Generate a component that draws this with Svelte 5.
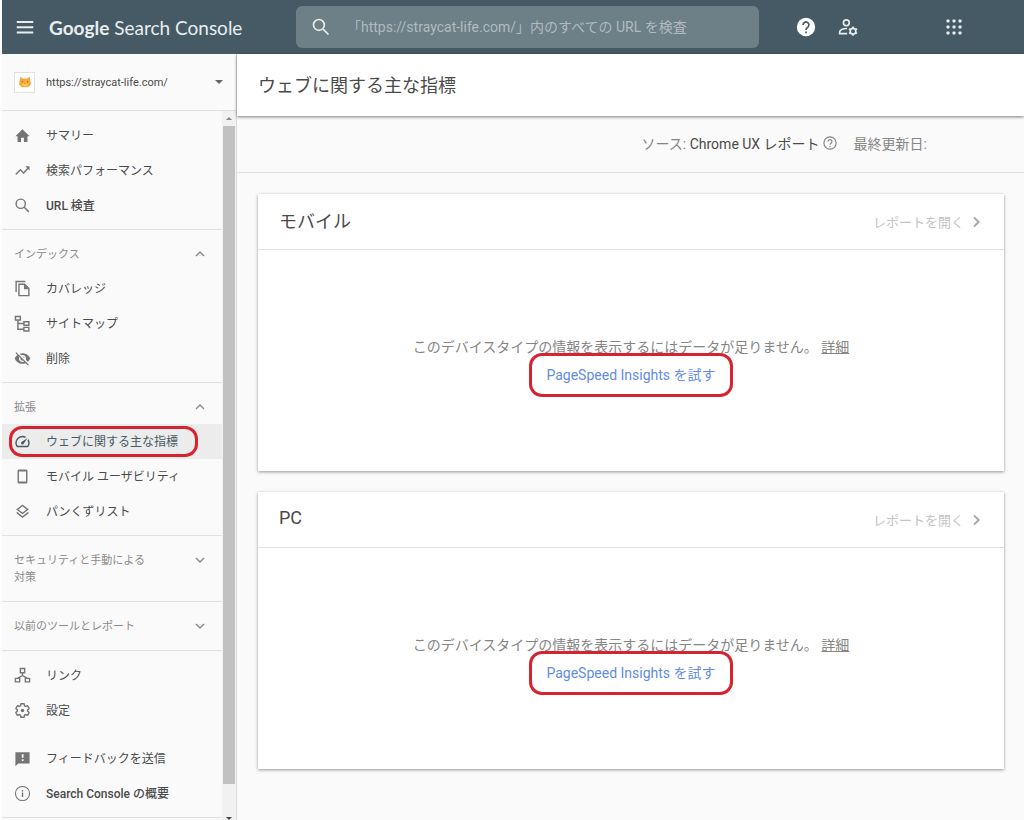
<script>
  const gear =
    'M19.14 12.94c.04-.3.06-.61.06-.94 0-.32-.02-.64-.07-.94l2.03-1.58c.18-.14.23-.41.12-.61l-1.92-3.32c-.12-.22-.37-.29-.59-.22l-2.39.96c-.5-.38-1.03-.7-1.62-.94l-.36-2.54c-.04-.24-.24-.41-.48-.41h-3.84c-.24 0-.43.17-.47.41l-.36 2.54c-.59.24-1.13.57-1.62.94l-2.39-.96c-.22-.08-.47 0-.59.22L2.74 8.87c-.12.21-.08.47.12.61l2.03 1.58c-.05.3-.09.63-.09.94s.02.64.07.94l-2.03 1.58c-.18.14-.23.41-.12.61l1.92 3.32c.12.22.37.29.59.22l2.39-.96c.5.38 1.03.7 1.62.94l.36 2.54c.05.24.24.41.48.41h3.84c.24 0 .44-.17.47-.41l.36-2.54c.59-.24 1.13-.56 1.62-.94l2.39.96c.22.08.47 0 .59-.22l1.92-3.32c.12-.22.07-.47-.12-.61z';

  const groups = [
    {
      items: [
        { icon: 'home', text: 'サマリー' },
        { icon: 'trend', text: '検索パフォーマンス' },
        { icon: 'search', text: 'URL 検査', medium: true }
      ]
    },
    {
      label: 'インデックス',
      open: true,
      items: [
        { icon: 'copy', text: 'カバレッジ' },
        { icon: 'tree', text: 'サイトマップ' },
        { icon: 'hidden', text: '削除' }
      ]
    },
    {
      label: '拡張',
      open: true,
      items: [
        { icon: 'speed', text: 'ウェブに関する主な指標', active: true },
        { icon: 'phone', text: 'モバイル ユーザビリティ' },
        { icon: 'layers', text: 'パンくずリスト' }
      ]
    },
    { label: 'セキュリティと手動による対策', items: [] },
    { label: '以前のツールとレポート', items: [] },
    {
      items: [
        { icon: 'links', text: 'リンク' },
        { icon: 'settings', text: '設定' },
        { icon: 'feedback', text: 'フィードバックを送信', spaced: true },
        { icon: 'info', text: 'Search Console の概要', medium: true }
      ]
    }
  ];

  const cards = ['モバイル', 'PC'];
</script>

{#snippet glyph(name)}
  <svg class="icon" viewBox="0 0 24 24" aria-hidden="true">
    {#if name === 'home'}
      <path d="M10 21v-6h4v6h5v-8h3L12 3 2 13h3v8z" />
    {:else if name === 'trend'}
      <path class="line" d="M2.500 17.500L9 11l4.500 4.500L20.500 8" />
      <path d="M16 6h6v6z" />
    {:else if name === 'search'}
      <circle class="line" cx="9.500" cy="9.500" r="6.500" />
      <path class="line" d="M14.500 14.500l6.500 6.500" />
    {:else if name === 'copy'}
      <path class="line" d="M3 17V2h13M7 6h8l6 6v10H7z" />
      <path d="M14 6v7h7z" />
    {:else if name === 'tree'}
      <path class="line" d="M2 2h7v5H2zM14 9.500h7v5h-7zM14 17.500h7v5h-7zM5.500 7v13H14M5.500 12H14" />
    {:else if name === 'hidden'}
      <path d="M12 7c2.760 0 5 2.240 5 5 0 .65-.13 1.260-.36 1.830l2.920 2.920c1.510-1.260 2.700-2.890 3.430-4.750-1.730-4.390-6-7.500-11-7.500-1.400 0-2.740.25-3.980.7l2.160 2.160C10.740 7.130 11.350 7 12 7zM2 4.270l2.740 2.740C3.080 8.300 1.780 10.020 1 12c1.730 4.390 6 7.500 11 7.500 1.550 0 3.030-.3 4.380-.84l3.350 3.340L21 20.730 3.270 3 2 4.270zM7.530 9.800l1.550 1.550c-.05.21-.08.43-.08.65 0 1.660 1.340 3 3 3 .22 0 .44-.03.65-.08l1.550 1.550c-.67.33-1.410.53-2.200.53-2.760 0-5-2.240-5-5 0-.79.2-1.530.53-2.200zm4.310-.78l3.150 3.150.02-.16c0-1.660-1.340-3-3-3l-.17.01z" />
    {:else if name === 'speed'}
      <path d="M20.380 8.570l-1.230 1.850a8 8 0 0 1-.22 7.580H5.070A8 8 0 0 1 15.580 6.850l1.850-1.230A10 10 0 0 0 3.350 19a2 2 0 0 0 1.720 1h13.850a2 2 0 0 0 1.740-1 10 10 0 0 0-.27-10.440zM10.590 15.410a2 2 0 0 0 2.830 0l5.660-8.490-8.490 5.660a2 2 0 0 0 0 2.830z" />
    {:else if name === 'phone'}
      <rect class="line" x="6" y="3" width="12" height="18" rx="1" />
      <path class="line" d="M6 4h12M6 20h12" />
    {:else if name === 'layers'}
      <path d="M11.990 18.540l-7.370-5.730L3 14.070l9 7 9-7-1.630-1.270zM12 16l7.360-5.730L21 9l-9-7-9 7 1.630 1.270L12 16zm0-11.470L17.740 9 12 13.470 6.260 9 12 4.530z" />
    {:else if name === 'links'}
      <path class="line" d="M9 2h6v6H9zM2 16h6v5H2zM16 16h6v5h-6zM12 8v4M5 16l7-4 7 4" />
    {:else if name === 'settings'}
      <path class="line" d={gear} />
      <circle cx="12" cy="12" r="2.500" />
    {:else if name === 'feedback'}
      <path fill-rule="evenodd" d="M2 3h20v16H6l-4 4zM11 6v5h2.500V6zM11 13v2.500h2.500V13z" />
    {:else if name === 'info'}
      <circle class="thin" cx="12" cy="12" r="10" />
      <path d="M11 10.500h2V17h-2zM11 7h2v2h-2z" />
    {:else if name === 'menu'}
      <path d="M1 4h22v2.500H1zM1 11h22v2.500H1zM1 18h22v2.500H1z" />
    {:else if name === 'help'}
      <circle cx="12" cy="12" r="11" />
      <path class="cut" d="M8.500 9.500a3.500 3.500 0 1 1 5.800 2.600C13 13.200 12 13.600 12 15.500M12 17.300v2.200" />
    {:else if name === 'helpline'}
      <circle class="line" cx="12" cy="12" r="10.500" />
      <path class="line" d="M8.700 9.600a3.300 3.300 0 1 1 5.500 2.400C13 13 12 13.400 12 15M12 16.500v2" />
    {:else if name === 'usergear'}
      <circle class="line" cx="10" cy="7" r="3.500" />
      <path class="line" d="M11 20H2v-2c0-2.700 4-4.200 8-4.200h1" />
      <circle class="line" cx="18" cy="17" r="3.400" />
      <path class="line" d="M18 11.500v2M18 20.500v2M13.200 14.200l1.800 1M21 18.800l1.800 1M13.200 19.800l1.800-1M21 15.200l1.800-1" />
    {:else if name === 'apps'}
      {#each [4, 12, 20] as cy}
        {#each [4, 12, 20] as cx}
          <rect x={cx - 2} y={cy - 2} width="4" height="4" rx="1" />
        {/each}
      {/each}
    {:else if name === 'up'}
      <path class="line" d="M6 15l6-6 6 6" />
    {:else if name === 'down'}
      <path class="line" d="M6 9l6 6 6-6" />
    {:else if name === 'right'}
      <path class="heavy" d="M9 5l7 7-7 7" />
    {/if}
  </svg>
{/snippet}

<div class="app">
  <header>
    <div class="brand">
      <button class="menu" aria-label="メニュー">{@render glyph('menu')}</button>
      <a class="logo" href="#home"><span>Google</span> Search Console</a>
    </div>
    <label class="search">
      {@render glyph('search')}
      <input type="text" aria-label="URL 検査" placeholder="「https://straycat-life.com/」内のすべての URL を検査" />
    </label>
    <div class="tools">
      <button aria-label="ヘルプ">{@render glyph('help')}</button>
      <button aria-label="ユーザー設定">{@render glyph('usergear')}</button>
    </div>
    <button class="apps" aria-label="アプリ">{@render glyph('apps')}</button>
  </header>

  <div class="columns">
    <aside>
      <button class="site">
        <span class="favicon">
          <svg viewBox="0 0 16 16" aria-hidden="true">
            <path fill="#f5a93b" d="M2.500 2L5.500 4h5l3-2 .5 4.500c1.500 3.500.5 7.500-6 7.500s-7.500-4-6-7.500z" />
            <path fill="#ffc65c" d="M5 10c1-1.500 5-1.500 6 0 .5 2-.8 3-3 3s-3.500-1-3-3z" />
            <path fill="#8a5a1e" d="M4.500 7h1.200v1.200H4.500zM10.300 7h1.200v1.200h-1.200zM7.400 9.300h1.200v.9H7.400z" />
          </svg>
        </span>
        <span class="url">https://straycat-life.com/</span>
        <i class="caret"></i>
      </button>
      <div class="scroller">
        <nav>
          {#each groups as group}
            <section class:closed={group.label && !group.open} class:loose={!group.label}>
              {#if group.label}
                <button class="label">
                  <span>{group.label}</span>
                  {@render glyph(group.open ? 'up' : 'down')}
                </button>
              {/if}
              {#each group.items as item}
                <a
                  href="#{item.icon}"
                  class="item"
                  class:active={item.active}
                  class:medium={item.medium}
                  class:spaced={item.spaced}
                >
                  {@render glyph(item.icon)}
                  <span>{item.text}</span>
                  {#if item.active}<i class="mark"></i>{/if}
                </a>
              {/each}
            </section>
          {/each}
        </nav>
        <div class="bar" aria-hidden="true">
          <i class="arrow"></i>
          <i class="thumb"></i>
          <i class="arrow end"></i>
        </div>
      </div>
    </aside>

    <main>
      <h1>ウェブに関する主な指標</h1>
      <div class="meta">
        <span>ソース: <b>Chrome UX レポート</b></span>
        {@render glyph('helpline')}
        <span class="date">最終更新日:</span>
      </div>
      <div class="cards">
        {#each cards as title}
          <article>
            <div class="head">
              <h2>{title}</h2>
              <button class="open" disabled>レポートを開く {@render glyph('right')}</button>
            </div>
            <div class="body">
              <p>このデバイスタイプの情報を表示するにはデータが足りません。 <a href="#more">詳細</a></p>
              <a class="try" href="#psi">PageSpeed Insights を試す<i class="mark"></i></a>
            </div>
          </article>
        {/each}
      </div>
    </main>
  </div>
</div>

<style>
  :global(body) {
    background: #fff;
  }

  .app,
  .app * {
    box-sizing: border-box;
  }

  .app {
    display: flex;
    flex-direction: column;
    height: 100vh;
    overflow: hidden;
    padding-left: 2px;
    color: #4a4a4a;
    font-family: Roboto, 'Noto Sans CJK JP', sans-serif;
    font-size: 14px;
  }

  button {
    padding: 0;
    border: 0;
    background: none;
    color: inherit;
    font: inherit;
    text-align: left;
  }

  a {
    color: inherit;
    text-decoration: none;
  }

  .icon {
    display: block;
    flex: none;
    width: 18px;
    height: 18px;
    fill: currentColor;
  }

  .line,
  .thin,
  .heavy,
  .cut {
    fill: none;
    stroke: currentColor;
    stroke-width: 2;
  }

  .thin {
    stroke-width: 1.5;
  }

  .heavy {
    stroke-width: 3;
  }

  .cut {
    stroke: #455a64;
  }

  header {
    display: flex;
    flex: none;
    align-items: center;
    height: 54px;
    background: #455a64;
    color: #e8edef;
  }

  .brand {
    display: flex;
    flex: 0 0 294px;
    align-items: center;
    gap: 15px;
    padding-left: 14px;
  }

  .logo {
    font-family: Lato, sans-serif;
    font-size: 19px;
    white-space: nowrap;
  }

  .logo span {
    font-weight: 700;
  }

  .search {
    display: flex;
    flex: 0 1 463px;
    align-items: center;
    gap: 16px;
    height: 42px;
    padding: 0 15px;
    border-radius: 6px;
    background: #6d7f87;
  }

  .search .icon {
    width: 20px;
    height: 20px;
  }

  .search input {
    flex: 1;
    min-width: 0;
    padding: 0;
    border: 0;
    outline: 0;
    background: none;
    color: #fff;
    font: inherit;
  }

  .search input::placeholder {
    color: #b0bbc0;
    opacity: 1;
  }

  .tools {
    display: flex;
    gap: 22px;
    padding-left: 37px;
  }

  .tools .icon {
    width: 20px;
    height: 20px;
  }

  .tools button:first-child {
    color: #fff;
  }

  .apps {
    margin-right: 61px;
    margin-left: auto;
  }

  .columns {
    display: flex;
    flex: 1;
    min-height: 0;
    background: #fafafa;
  }

  aside {
    display: flex;
    flex: 0 0 235px;
    flex-direction: column;
    border-right: 1px solid #dcdcdc;
  }

  .site {
    display: flex;
    flex: none;
    align-items: center;
    height: 57px;
    padding: 0 13px 0 12px;
    border-bottom: 1px solid #e0e0e0;
    font-size: 11px;
  }

  .favicon {
    display: grid;
    width: 21px;
    height: 21px;
    margin-right: 11px;
    border: 1px solid #e0e0e0;
    background: #fff;
    place-items: center;
  }

  .favicon svg {
    width: 14px;
    height: 14px;
  }

  .url {
    flex: 1;
  }

  .caret {
    border: 4px solid transparent;
    border-top-color: #666;
    border-bottom: 0;
  }

  .scroller {
    display: flex;
    flex: 1;
    min-height: 0;
  }

  nav {
    flex: 1;
    overflow: hidden;
  }

  section {
    padding: 6px 0;
    border-bottom: 1px solid #e0e0e0;
  }

  section.closed {
    padding-bottom: 7px;
  }

  section.loose {
    padding-top: 7px;
  }

  .label {
    display: flex;
    align-items: flex-start;
    justify-content: space-between;
    width: 100%;
    padding: 10px 14px 8px 12px;
    color: #8a8a8a;
    font-size: 11px;
    line-height: 17px;
  }

  .label span {
    max-width: 136px;
  }

  .label .icon {
    width: 16px;
    height: 16px;
  }

  .item {
    position: relative;
    display: flex;
    align-items: center;
    gap: 15px;
    height: 35px;
    padding-left: 12px;
    font-size: 12px;
  }

  .item span {
    padding-bottom: 2px;
  }

  .item .icon {
    width: 17px;
    height: 17px;
    color: #757575;
  }

  .item.medium {
    font-weight: 500;
  }

  .item.spaced {
    margin-top: 13px;
  }

  .item.active,
  .item.active .icon {
    background: #ececec;
    color: #455a64;
  }

  .mark {
    position: absolute;
    border: 3px solid #d8232f;
    border-radius: 13px;
    pointer-events: none;
  }

  .item .mark {
    inset: 2px 24px 2px 7px;
  }

  .bar {
    display: flex;
    flex: 0 0 14px;
    flex-direction: column;
    align-items: center;
    background: #f1f1f1;
  }

  .thumb {
    flex: 1;
    width: 12px;
    background: #c1c1c1;
  }

  .arrow {
    display: flex;
    flex: 0 0 15px;
    justify-content: center;
    align-items: center;
  }

  .arrow::before {
    content: '';
    border: 3px solid transparent;
    border-top: 0;
    border-bottom-color: #888;
  }

  .arrow.end {
    flex-basis: 36px;
    align-items: flex-end;
  }

  .arrow.end::before {
    border-top: 3px solid #444;
    border-bottom: 0;
  }

  main {
    flex: 1;
    min-width: 0;
  }

  h1,
  h2,
  p {
    margin: 0;
    font-size: 18px;
    font-weight: 400;
  }

  h1 {
    position: relative;
    display: flex;
    align-items: center;
    height: 62px;
    padding: 0 21px 2px;
    background: #fff;
    box-shadow: 0 1px 3px rgba(0, 0, 0, 0.5);
  }

  .meta {
    display: flex;
    align-items: center;
    justify-content: flex-end;
    gap: 3px;
    height: 57px;
    padding: 0 97px 2px 0;
    border-bottom: 1px solid #e0e0e0;
    color: #858585;
  }

  .meta b {
    color: #4a4a4a;
    font-weight: 400;
  }

  .meta .icon {
    width: 14px;
    height: 14px;
  }

  .date {
    margin-left: 14px;
  }

  .cards {
    display: flex;
    flex-direction: column;
    gap: 21px;
    padding: 21px 20px 20px 21px;
  }

  article {
    background: #fff;
    box-shadow: 0 1px 3px rgba(0, 0, 0, 0.4);
  }

  .head {
    display: flex;
    align-items: center;
    justify-content: space-between;
    height: 56px;
    padding: 0 20px 0 21px;
    border-bottom: 1px solid #e0e0e0;
  }

  h2 {
    padding-bottom: 4px;
  }

  .open {
    display: flex;
    align-items: center;
    gap: 4px;
    color: #c4c4c4;
    font-size: 13px;
  }

  .open .icon {
    width: 16px;
    height: 16px;
    color: #a8a8a8;
  }

  .body {
    display: flex;
    flex-direction: column;
    align-items: center;
    padding: 83px 0 82px;
    color: #858585;
    line-height: 28px;
  }

  .body p {
    font-size: 14px;
  }

  .body p a {
    text-decoration: underline;
  }

  .try {
    position: relative;
    color: #5f8ce8;
  }

  .try .mark {
    inset: -8px -17px;
  }
</style>
